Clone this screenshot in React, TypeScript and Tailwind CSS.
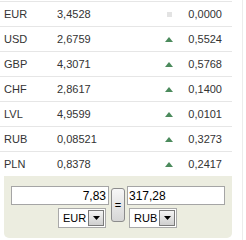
import React from 'react';

type Rate = {
  code: string;
  value: string;
  change: string;
  trend: 'flat' | 'up';
};

const rates: Rate[] = [
  { code: 'EUR', value: '3,4528', change: '0,0000', trend: 'flat' },
  { code: 'USD', value: '2,6759', change: '0,5524', trend: 'up' },
  { code: 'GBP', value: '4,3071', change: '0,5768', trend: 'up' },
  { code: 'CHF', value: '2,8617', change: '0,1400', trend: 'up' },
  { code: 'LVL', value: '4,9599', change: '0,0101', trend: 'up' },
  { code: 'RUB', value: '0,08521', change: '0,3273', trend: 'up' },
  { code: 'PLN', value: '0,8378', change: '0,2417', trend: 'up' },
];

const Trend: React.FC<{ trend: Rate['trend'] }> = ({ trend }) =>
  trend === 'up' ? (
    <svg width="8" height="5" viewBox="0 0 8 5" className="block">
      <polygon points="4,0 8,5 0,5" fill="#4b8a5c" />
    </svg>
  ) : (
    <span className="block w-[5px] h-[5px] bg-[#e3e3e3]" />
  );

const FakeSelect: React.FC<{ label: string; className?: string }> = ({ label, className }) => (
  <div
    className={`flex items-center w-[48px] h-[20px] bg-white border border-[#a9a9a9] ${className ?? ''}`}
  >
    <span className="flex-1 pl-[4px] text-[11px] text-black leading-none">{label}</span>
    <span className="flex items-center justify-center w-[16px] h-[16px] mr-[1px] border border-[#7a7a7a] bg-gradient-to-b from-[#f4f4f4] to-[#cfcfcf]">
      <svg width="7" height="4" viewBox="0 0 7 4">
        <polygon points="0,0 7,0 3.5,4" fill="#000" />
      </svg>
    </span>
  </div>
);

const App: React.FC = () => {
  return (
    <div className="flex w-[246px] h-[240px] bg-white font-['Liberation_Sans',Arial,sans-serif] overflow-hidden">
      <div className="w-[232px] pt-[1px]">
        {rates.map((r) => (
          <div
            key={r.code}
            className="flex items-center h-[25px] border-t border-[#e6e6e6] text-[11px] text-[#333]"
          >
            <span className="w-[57px] pl-[4px]">{r.code}</span>
            <span className="w-[106px]">{r.value}</span>
            <span className="w-[12px] flex justify-center">
              <Trend trend={r.trend} />
            </span>
            <span className="flex-1 text-right pr-[10px]">{r.change}</span>
          </div>
        ))}

        {/* converter */}
        <div className="ml-[4px] w-[228px] h-[62px] bg-[#ecedE0] rounded-b-[5px] pt-[10px] flex justify-center gap-[2px]">
          <div className="flex flex-col items-end w-[98px]">
            <input
              readOnly
              value="7,83"
              className="w-[98px] h-[19px] border border-[#a5a5a5] bg-white text-right pr-[2px] text-[12px] text-black outline-none"
            />
            <FakeSelect label="EUR" className="mt-[3px] mr-[3px]" />
          </div>
          <button className="mt-[2px] w-[14px] h-[34px] rounded-[3px] border border-[#8c8c8c] bg-gradient-to-b from-[#f7f7f7] to-[#d6d6d6] text-[11px] leading-none text-black flex items-center justify-center">
            =
          </button>
          <div className="flex flex-col items-start w-[98px]">
            <input
              readOnly
              value="317,28"
              className="w-[98px] h-[19px] border border-[#a5a5a5] bg-white pl-[1px] text-[12px] text-black outline-none"
            />
            <FakeSelect label="RUB" className="mt-[3px] ml-[2px]" />
          </div>
        </div>
      </div>
      <div className="ml-[10px] w-px h-full bg-[#ececec]" />
    </div>
  );
};

export default App;
